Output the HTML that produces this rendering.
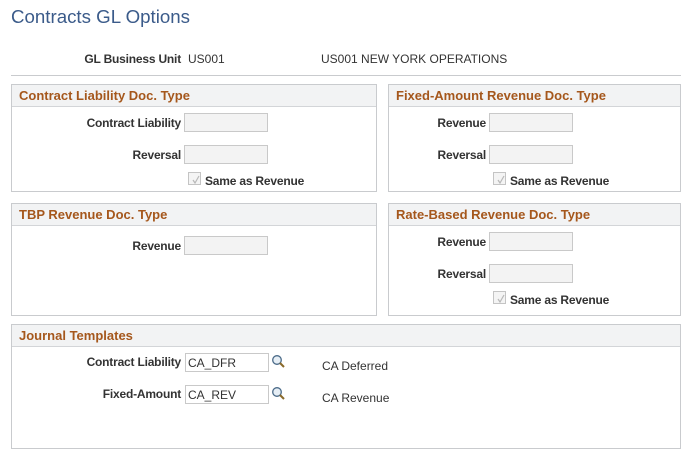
<!DOCTYPE html>
<html><head><meta charset="utf-8"><style>
*{margin:0;padding:0;box-sizing:border-box}
body{width:694px;height:462px;background:#fff;font-family:"Liberation Sans",Arial,sans-serif;position:relative;overflow:hidden}
.a{position:absolute;white-space:nowrap}
.t{left:11px;top:6px;font-size:18.7px;color:#3b5b8a}
.l{font-size:12px;font-weight:bold;color:#333;text-align:right;width:170px;letter-spacing:-0.2px}
.v{font-size:12px;color:#333}
.box{position:absolute;border:1px solid #c9cbce;background:#fff}
.hd{height:22px;background:#f2f3f4;border-bottom:1px solid #d3d5d8;font-size:13px;font-weight:bold;color:#a5571c;padding:3px 0 0 7px}
.in{position:absolute;width:84px;height:19px;border:1px solid #c9c9c9;background:#f3f3f3;font-size:12px;color:#333;padding:2px 0 0 2px}
.in.w{background:#fff}
.cb{position:absolute;width:13px;height:13px;border:1px solid #c4c4c4;background:#f4f4f4}
.cb svg{position:absolute;left:1px;top:1px}
.mg{position:absolute}
</style></head><body>
<div class="a t">Contracts GL Options</div>
<div class="a l" style="left:11px;top:52px">GL Business Unit</div>
<div class="a v" style="left:188px;top:52px">US001</div>
<div class="a v" style="left:321px;top:52px">US001 NEW YORK OPERATIONS</div>
<div class="a" style="left:11px;top:75px;width:670px;height:1px;background:#c9cbce"></div>

<div class="box" style="left:11px;top:84px;width:366px;height:108px"><div class="hd">Contract Liability Doc. Type</div></div>
<div class="a l" style="left:11px;top:116px">Contract Liability</div>
<div class="in" style="left:184px;top:113px"></div>
<div class="a l" style="left:11px;top:148px">Reversal</div>
<div class="in" style="left:184px;top:145px"></div>
<div class="cb" style="left:188px;top:172px"><svg width="11" height="11"><path d="M3 6 L5 9 L9 2" stroke="#b8b8b8" fill="none" stroke-width="1.2"/></svg></div>
<div class="a l" style="left:205px;top:174px;text-align:left;width:auto">Same as Revenue</div>

<div class="box" style="left:388px;top:84px;width:293px;height:108px"><div class="hd">Fixed-Amount Revenue Doc. Type</div></div>
<div class="a l" style="left:316px;top:116px">Revenue</div>
<div class="in" style="left:489px;top:113px"></div>
<div class="a l" style="left:316px;top:148px">Reversal</div>
<div class="in" style="left:489px;top:145px"></div>
<div class="cb" style="left:493px;top:172px"><svg width="11" height="11"><path d="M3 6 L5 9 L9 2" stroke="#b8b8b8" fill="none" stroke-width="1.2"/></svg></div>
<div class="a l" style="left:510px;top:174px;text-align:left;width:auto">Same as Revenue</div>

<div class="box" style="left:11px;top:203px;width:366px;height:113px"><div class="hd">TBP Revenue Doc. Type</div></div>
<div class="a l" style="left:11px;top:239px">Revenue</div>
<div class="in" style="left:184px;top:236px"></div>

<div class="box" style="left:388px;top:203px;width:293px;height:113px"><div class="hd">Rate-Based Revenue Doc. Type</div></div>
<div class="a l" style="left:316px;top:235px">Revenue</div>
<div class="in" style="left:489px;top:232px"></div>
<div class="a l" style="left:316px;top:267px">Reversal</div>
<div class="in" style="left:489px;top:264px"></div>
<div class="cb" style="left:493px;top:291px"><svg width="11" height="11"><path d="M3 6 L5 9 L9 2" stroke="#b8b8b8" fill="none" stroke-width="1.2"/></svg></div>
<div class="a l" style="left:510px;top:293px;text-align:left;width:auto">Same as Revenue</div>

<div class="box" style="left:11px;top:324px;width:670px;height:125px"><div class="hd">Journal Templates</div></div>
<div class="a l" style="left:11px;top:355px">Contract Liability</div>
<div class="in w" style="left:185px;top:353px">CA_DFR</div>
<svg class="mg" style="left:271px;top:354px" width="15" height="15"><circle cx="6" cy="6" r="4.3" stroke="#4a6a88" stroke-width="1.3" fill="#e6eef5"/><path d="M9 9 L13 13" stroke="#8a6a2a" stroke-width="2"/></svg>
<div class="a v" style="left:322px;top:359px">CA Deferred</div>
<div class="a l" style="left:11px;top:387px">Fixed-Amount</div>
<div class="in w" style="left:185px;top:385px">CA_REV</div>
<svg class="mg" style="left:271px;top:386px" width="15" height="15"><circle cx="6" cy="6" r="4.3" stroke="#4a6a88" stroke-width="1.3" fill="#e6eef5"/><path d="M9 9 L13 13" stroke="#8a6a2a" stroke-width="2"/></svg>
<div class="a v" style="left:322px;top:391px">CA Revenue</div>
</body></html>
